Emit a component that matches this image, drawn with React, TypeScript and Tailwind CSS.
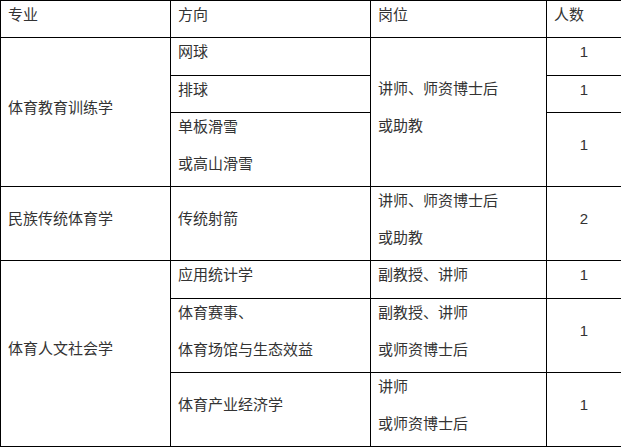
import React from "react";

type CellProps = {
  lines: string[];
  col: string;
  row: string;
  center?: boolean;
};

function Cell({ lines, col, row, center }: CellProps) {
  return (
    <div
      className={`${col} ${row} flex flex-col justify-center border-r border-b border-black px-[7px] ${
        center ? "items-center" : "items-start"
      }`}
    >
      <div className="flex flex-col pb-[9px] gap-[9px]">
        {lines.map((l, i) => (
          <div key={i} className="h-[28px] leading-[28px] whitespace-nowrap">
            {l}
          </div>
        ))}
      </div>
    </div>
  );
}

export default function App() {
  return (
    <div className="w-[621px] h-[447px] overflow-hidden bg-white">
      <div
        className="grid w-[622px] border-t border-l border-black text-[15px] text-[#333]"
        style={{ fontFamily: '"Liberation Sans", "Noto Sans CJK SC", sans-serif' }}
      >
        <div className="grid grid-cols-[170px_200px_176px_75px] grid-rows-[37px_38px_37px_74px_74px_38px_74px_74px]">
          {/* header */}
          <Cell col="col-start-1" row="row-start-1" lines={["专业"]} />
          <Cell col="col-start-2" row="row-start-1" lines={["方向"]} />
          <Cell col="col-start-3" row="row-start-1" lines={["岗位"]} />
          <Cell col="col-start-4" row="row-start-1" lines={["人数"]} />

          {/* 体育教育训练学 */}
          <Cell col="col-start-1" row="row-start-2 row-span-3" lines={["体育教育训练学"]} />
          <Cell col="col-start-2" row="row-start-2" lines={["网球"]} />
          <Cell col="col-start-2" row="row-start-3" lines={["排球"]} />
          <Cell col="col-start-2" row="row-start-4" lines={["单板滑雪", "或高山滑雪"]} />
          <Cell col="col-start-3" row="row-start-2 row-span-3" lines={["讲师、师资博士后", "或助教"]} />
          <Cell col="col-start-4" row="row-start-2" lines={["1"]} center />
          <Cell col="col-start-4" row="row-start-3" lines={["1"]} center />
          <Cell col="col-start-4" row="row-start-4" lines={["1"]} center />

          {/* 民族传统体育学 */}
          <Cell col="col-start-1" row="row-start-5" lines={["民族传统体育学"]} />
          <Cell col="col-start-2" row="row-start-5" lines={["传统射箭"]} />
          <Cell col="col-start-3" row="row-start-5" lines={["讲师、师资博士后", "或助教"]} />
          <Cell col="col-start-4" row="row-start-5" lines={["2"]} center />

          {/* 体育人文社会学 */}
          <Cell col="col-start-1" row="row-start-6 row-span-3" lines={["体育人文社会学"]} />
          <Cell col="col-start-2" row="row-start-6" lines={["应用统计学"]} />
          <Cell col="col-start-3" row="row-start-6" lines={["副教授、讲师"]} />
          <Cell col="col-start-4" row="row-start-6" lines={["1"]} center />
          <Cell col="col-start-2" row="row-start-7" lines={["体育赛事、", "体育场馆与生态效益"]} />
          <Cell col="col-start-3" row="row-start-7" lines={["副教授、讲师", "或师资博士后"]} />
          <Cell col="col-start-4" row="row-start-7" lines={["1"]} center />
          <Cell col="col-start-2" row="row-start-8" lines={["体育产业经济学"]} />
          <Cell col="col-start-3" row="row-start-8" lines={["讲师", "或师资博士后"]} />
          <Cell col="col-start-4" row="row-start-8" lines={["1"]} center />
        </div>
      </div>
    </div>
  );
}
